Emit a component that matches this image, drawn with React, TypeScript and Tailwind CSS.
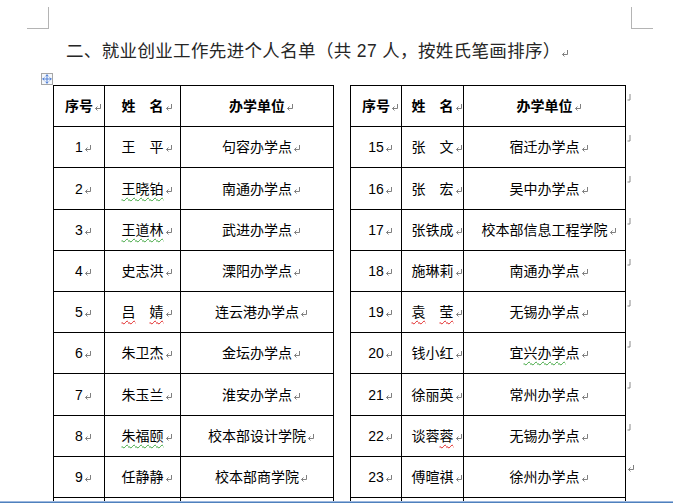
import { Move } from 'lucide-react';

type Seg = { t: string; u?: 'g' | 'r' };
type Row = { no: string; name: Seg[]; unit: Seg[] };

const s = (t: string, u?: 'g' | 'r'): Seg => ({ t, u });

const leftRows: Row[] = [
  { no: '1', name: [s('王　平')], unit: [s('句容办学点')] },
  { no: '2', name: [s('王晓铂', 'g')], unit: [s('南通办学点')] },
  { no: '3', name: [s('王道林', 'g')], unit: [s('武进办学点')] },
  { no: '4', name: [s('史志洪')], unit: [s('溧阳办学点')] },
  { no: '5', name: [s('吕', 'r'), s('　'), s('婧', 'r')], unit: [s('连云港办学点')] },
  { no: '6', name: [s('朱卫杰')], unit: [s('金坛办学点')] },
  { no: '7', name: [s('朱玉兰')], unit: [s('淮安办学点')] },
  { no: '8', name: [s('朱福颐', 'g')], unit: [s('校本部设计学院')] },
  { no: '9', name: [s('任静静')], unit: [s('校本部商学院')] },
];

const rightRows: Row[] = [
  { no: '15', name: [s('张　文')], unit: [s('宿迁办学点')] },
  { no: '16', name: [s('张　宏')], unit: [s('吴中办学点')] },
  { no: '17', name: [s('张铁成')], unit: [s('校本部信息工程学院')] },
  { no: '18', name: [s('施琳莉')], unit: [s('南通办学点')] },
  { no: '19', name: [s('袁', 'r'), s('　'), s('莹', 'r')], unit: [s('无锡办学点')] },
  { no: '20', name: [s('钱小红')], unit: [s('宜'), s('兴办学', 'g'), s('点')] },
  { no: '21', name: [s('徐丽英')], unit: [s('常州办学点')] },
  { no: '22', name: [s('谈蓉'), s('蓉', 'r')], unit: [s('无锡办学点')] },
  { no: '23', name: [s('傅暄祺')], unit: [s('徐州办学点')] },
];

// header + 9 rows + the cut-off row at the bottom
const rowH = [41, 41, 42, 41, 41, 41, 41, 42, 41, 41, 41];

const ReturnMark = () => (
  <svg width="8" height="7" viewBox="0 0 8 7" className="shrink-0">
    <path d="M6.5 0V4.5H1.5M3.5 2.5L1.5 4.5L3.5 6.5" stroke="#7f7f7f" strokeWidth="1" fill="none" />
  </svg>
);

const CellMark = () => (
  <svg width="4" height="7" viewBox="0 0 4 7">
    <path d="M3 0V6H0.5" stroke="#8a8a8a" strokeWidth="1" fill="none" />
  </svg>
);

const Text = ({ segs, bold }: { segs: Seg[]; bold?: boolean }) => (
  <span className={`relative ${bold ? 'font-bold' : ''}`}>
    {segs.map((g, i) => (
      <span
        key={i}
        className={
          g.u === 'g'
            ? 'underline decoration-wavy decoration-[#3aa33a] decoration-1 underline-offset-[3px]'
            : g.u === 'r'
              ? 'underline decoration-wavy decoration-[#e02020] decoration-1 underline-offset-[3px]'
              : ''
        }
      >
        {g.t}
      </span>
    ))}
    <span className="absolute left-full bottom-[3px] ml-[1px] flex">
      <ReturnMark />
    </span>
  </span>
);

const Table = ({ rows, cols }: { rows: Row[]; cols: string }) => {
  const cell = (h: number, content: React.ReactNode, k: string) => (
    <div
      key={k}
      className={`${h === 42 ? 'h-[42px]' : 'h-[41px]'} border-r border-b border-black flex items-center justify-center`}
    >
      {content}
    </div>
  );
  return (
    <div className={`grid ${cols} border-t border-l border-black self-start`}>
      {cell(rowH[0], <Text segs={[s('序号')]} bold />, 'h0')}
      {cell(rowH[0], <Text segs={[s('姓　名')]} bold />, 'h1')}
      {cell(rowH[0], <Text segs={[s('办学单位')]} bold />, 'h2')}
      {rows.map((r, i) => [
        cell(rowH[i + 1], <Text segs={[s(r.no)]} />, `n${i}`),
        cell(rowH[i + 1], <Text segs={r.name} />, `m${i}`),
        cell(rowH[i + 1], <Text segs={r.unit} />, `u${i}`),
      ])}
      {cell(rowH[10], null, 'x0')}
      {cell(rowH[10], null, 'x1')}
      {cell(rowH[10], null, 'x2')}
    </div>
  );
};

export default function App() {
  return (
    <div className="w-[673px] h-[503px] bg-white flex flex-col overflow-hidden font-['Liberation_Sans','Noto_Sans_CJK_SC',sans-serif] text-black">
      <div className="h-[501px] overflow-hidden relative">
        {/* page corner marks */}
        <div className="absolute left-[27px] top-[7px] w-[22px] h-[22px] border-r border-b border-[#b4b4b4]" />
        <div className="absolute left-[631px] top-[7px] w-[22px] h-[22px] border-l border-b border-[#b4b4b4]" />

        <div className="pt-[42px] pl-[66px] text-[17.5px] leading-[18px] tracking-[0.35px] text-[#262626] flex items-end">
          <span>二、就业创业工作先进个人名单（共 27 人，按姓氏笔画排序）</span>
          <span className="mb-[3px] flex">
            <ReturnMark />
          </span>
        </div>

        <div className="mt-[25px] ml-[53px] flex relative text-[14px] leading-[16px]">
          <div className="absolute -left-[12px] -top-[12px] w-[12px] h-[12px] border border-[#a6a6a6] bg-[#f4f7fb] flex items-center justify-center">
            <Move size={10} strokeWidth={2} className="text-[#3b6fd0]" />
          </div>
          <Table rows={leftRows} cols="grid-cols-[51px_76px_153px]" />
          <div className="ml-[16px] flex">
            <Table rows={rightRows} cols="grid-cols-[51px_62px_162px]" />
            <div className="flex flex-col pt-[1px] pl-[1px]">
              {rowH.map((h, i) => (
                <div key={i} className={`${h === 42 ? 'h-[42px]' : 'h-[41px]'} pt-[8px]`}>
                  {i === 9 ? <ReturnMark /> : <CellMark />}
                </div>
              ))}
            </div>
          </div>
        </div>
      </div>
      <div className="h-[1px] bg-[#9db8df]" />
      <div className="h-[1px] bg-[#4f81bd]" />
    </div>
  );
}
